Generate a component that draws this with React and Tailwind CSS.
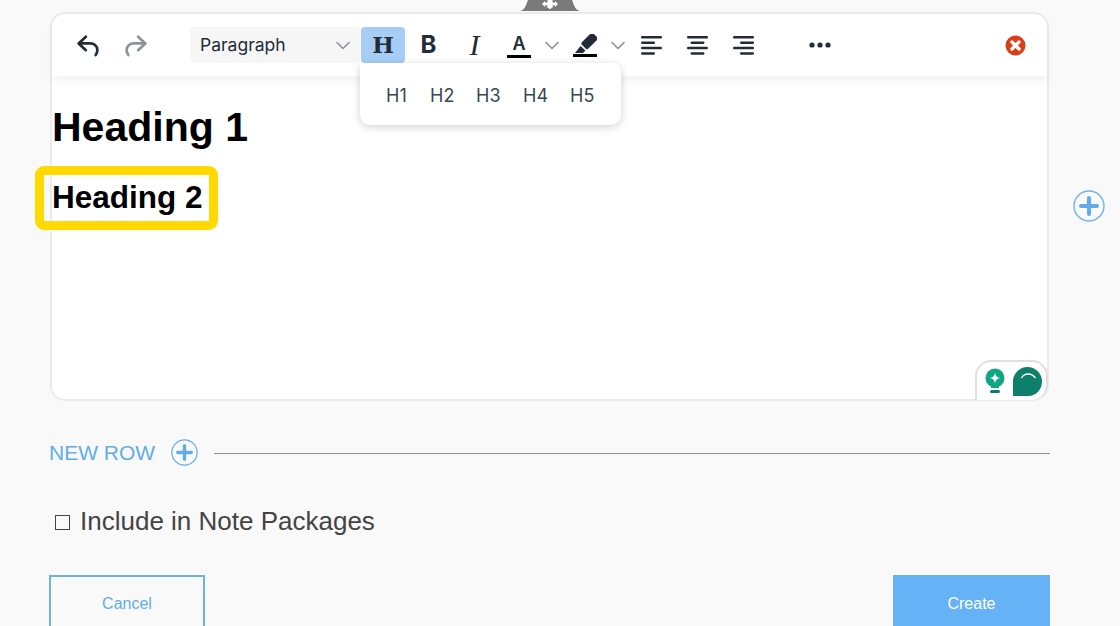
import React from "react";

const Chevron = () => (
  <svg width="14" height="9" viewBox="0 0 14 9" fill="none" stroke="#8b9299" strokeWidth="1.6" strokeLinecap="round" strokeLinejoin="round">
    <path d="M1 1.5 7 7.5 13 1.5" />
  </svg>
);

const Undo = ({ color, flip }) => (
  <svg width="25" height="25" viewBox="0 0 24 24" fill="none" stroke={color} strokeWidth="2.6" strokeLinecap="round" strokeLinejoin="round" className={flip ? "-scale-x-100" : ""}>
    <path d="M9.5 3.5 2.5 10l7 6.5" />
    <path d="M3 10h10.5c4 0 7 2.6 7 6.2 0 2-.6 3.6-1.6 5" />
  </svg>
);

const Align = ({ rows }) => (
  <svg width="22" height="20" viewBox="0 0 22 20" fill="#222b38">
    {rows.map(([x, w], i) => (
      <rect key={i} x={x} y={1 + i * 5.4} width={w} height="2.5" rx="1.1" />
    ))}
  </svg>
);

const PlusCircle = ({ size, ring, plus }) => (
  <svg width={size} height={size} viewBox="0 0 32 32" fill="none">
    <circle cx="16" cy="16" r="15" stroke={ring} strokeWidth="1.4" />
    <path d="M16 8v16M8 16h16" stroke={plus} strokeWidth="4" strokeLinecap="round" />
  </svg>
);

export default function App() {
  return (
    <div className="relative h-[626px] w-[1120px] overflow-hidden bg-[#f9f9f9] font-['Liberation_Sans',sans-serif]">
      <div className="absolute left-[520px] top-0 flex h-[11px] w-[60px] justify-center">
        <svg width="60" height="11" viewBox="0 0 60 11">
          <path d="M0 11C5 10 6 5 8 0h44c2 5 3 10 8 11z" fill="#7a7a7a" />
          <path d="M27.500 0h5v2.500H35V1l3 3-3 3V5.200h-2.500v1H34l-4 3-4-3h1.500v-1H25V7l-3-3 3-3v1.500h2.500z" fill="#fff" />
        </svg>
      </div>

      <div className="flex flex-col pl-[49px] pt-3">
        <div className="flex items-start">
          <div className="relative ml-[1px] h-[389px] w-[999px] rounded-[15px] border-2 border-[#ebebeb] bg-white">
            <div className="flex h-[62px] items-center rounded-t-[14px] bg-white pl-[24px] shadow-[0_5px_10px_rgba(0,0,0,0.05)]">
              <div className="flex w-[47px] justify-start"><Undo color="#222b38" /></div>
              <div className="flex w-[67px] justify-start"><Undo color="#8c949b" flip /></div>
              <div className="flex h-[36px] w-[170px] items-center justify-between rounded-[4px] bg-[#f6f6f6] pl-[10px] pr-[10px] font-['Inter',sans-serif] text-[17.5px] text-[#222b38]">
                <span>Paragraph</span>
                <Chevron />
              </div>
              <div className="ml-[1px] flex h-[36px] w-[44px] items-center justify-center rounded-[4px] bg-[#a5cdf6] pb-[2px] font-['DejaVu_Serif',serif] text-[23px] font-bold leading-none text-[#222b38]">H</div>
              <div className="flex w-[47px] justify-center font-['Inter',sans-serif] text-[24px] font-bold leading-none text-[#222b38]">B</div>
              <div className="flex w-[45px] justify-center font-['Liberation_Serif',serif] text-[30px] italic leading-none text-[#222b38]">I</div>
              <div className="flex w-[44px] flex-col items-center">
                <span className="font-['Inter',sans-serif] text-[18px] font-semibold leading-[22px] text-[#222b38]">A</span>
                <span className="h-[3px] w-[24px] bg-black"></span>
              </div>
              <div className="flex w-[21px] justify-center"><Chevron /></div>
              <div className="flex w-[45px] flex-col items-center">
                <svg width="24" height="20" viewBox="0 0 24 20" fill="#222b38">
                  <rect x="12" y="-1" width="9" height="16" rx="2" transform="rotate(45 16.500 7)" />
                  <path d="M2 19l5.500-7 5 4.500-2.500 2.500z" />
                </svg>
                <span className="h-[3px] w-[24px] bg-black"></span>
              </div>
              <div className="flex w-[21px] justify-center"><Chevron /></div>
              <div className="ml-[1px] flex w-[46px] justify-center"><Align rows={[[0, 21], [0, 14], [0, 21], [0, 14]]} /></div>
              <div className="flex w-[46px] justify-center"><Align rows={[[0, 21], [3.500, 14], [0, 21], [3.500, 14]]} /></div>
              <div className="flex w-[45px] justify-center"><Align rows={[[0, 21], [7, 14], [0, 21], [7, 14]]} /></div>
              <div className="ml-[31px] flex w-[46px] justify-center">
                <svg width="22" height="6" viewBox="0 0 22 6" fill="#222b38">
                  <circle cx="3" cy="3" r="2.600" /><circle cx="11" cy="3" r="2.600" /><circle cx="19" cy="3" r="2.600" />
                </svg>
              </div>
              <div className="ml-[161px] flex w-[22px] justify-center">
                <svg width="21" height="21" viewBox="0 0 21 21">
                  <circle cx="10.500" cy="10.500" r="10" fill="#dc3c16" />
                  <path d="M7 7l7 7M14 7l-7 7" stroke="#fff" strokeWidth="3.400" strokeLinecap="round" />
                </svg>
              </div>
            </div>

            <div className="pt-[24px]">
              <h1 className="text-[41px] font-bold leading-[54px] text-black">Heading 1</h1>
              <h2 className="mt-[24px] text-[31.5px] font-bold leading-[38px] text-black">Heading 2</h2>
            </div>

            <div className="absolute left-[308px] top-[49px] flex h-[62px] w-[261px] items-center rounded-b-[10px] rounded-tr-[8px] bg-white pl-[26px] pt-[2px] font-['Inter',sans-serif] text-[18px] text-[#3c4450] shadow-[0_2px_8px_rgba(0,0,0,0.18)]">
              <span className="w-[44px]">H1</span>
              <span className="w-[46px]">H2</span>
              <span className="w-[47px]">H3</span>
              <span className="w-[47px]">H4</span>
              <span>H5</span>
            </div>

            <div className="absolute left-[-17px] top-[152px] h-[64px] w-[183px] rounded-[9px] border-[9px] border-[#ffd900]"></div>

            <div className="absolute bottom-[-1px] right-[-1px] flex h-[40px] w-[73px] items-center gap-[8px] rounded-tl-[16px] rounded-tr-[16px] rounded-br-[16px] border-2 border-b-0 border-[#e0e0e0] bg-white pl-[8px]">
              <svg width="20" height="26" viewBox="0 0 20 26">
                <circle cx="10" cy="10" r="9.500" fill="#10a585" />
                <path d="M6 17h8v3H6z" fill="#10a585" />
                <path d="M10 4.500c.5 3.500 2 5 5.500 5.500-3.500.5-5 2-5.500 5.500-.5-3.500-2-5-5.500-5.500 3.500-.5 5-2 5.500-5.500z" fill="#fff" />
                <rect x="5" y="22" width="10" height="3" rx="1.500" fill="#0f7d68" />
              </svg>
              <svg width="29" height="29" viewBox="0 0 30 30">
                <path d="M0 30V15a15 15 0 0 1 30 0c0 8-6 15-14 15z" fill="#0e7f6a" />
                <path d="M9 11c3-5 10-5 14 0" fill="none" stroke="#fff" strokeWidth="1.400" strokeLinecap="round" />
              </svg>
            </div>
          </div>
          <div className="ml-[24px] mt-[178px]">
            <PlusCircle size={32} ring="#6fb0e8" plus="#62a9ee" />
          </div>
        </div>

        <div className="mt-[37px] flex h-[28px] w-[1001px] items-center">
          <span className="text-[21px] leading-none text-[#62ade6]">NEW ROW</span>
          <span className="ml-[16px] flex"><PlusCircle size={27} ring="#62ade6" plus="#62ade6" /></span>
          <span className="ml-[16px] mt-[2px] h-px flex-1 bg-[#8f8f8f]"></span>
        </div>

        <div className="mt-[39px] flex h-[32px] items-center pl-[6px]">
          <span className="mt-[2px] h-[15px] w-[15px] border-[1.5px] border-[#444]"></span>
          <span className="ml-[10px] text-[26px] leading-none text-[#444]">Include in Note Packages</span>
        </div>

        <div className="mt-[38px] flex w-[1001px] justify-between">
          <div className="flex h-[60px] w-[156px] items-center justify-center border-2 border-[#6fb2de] pb-[2px] text-[16px] text-[#62ade6]">Cancel</div>
          <div className="flex h-[60px] w-[157px] items-center justify-center bg-[#66b2f7] pb-[2px] text-[16px] text-white">Create</div>
        </div>
      </div>
    </div>
  );
}
